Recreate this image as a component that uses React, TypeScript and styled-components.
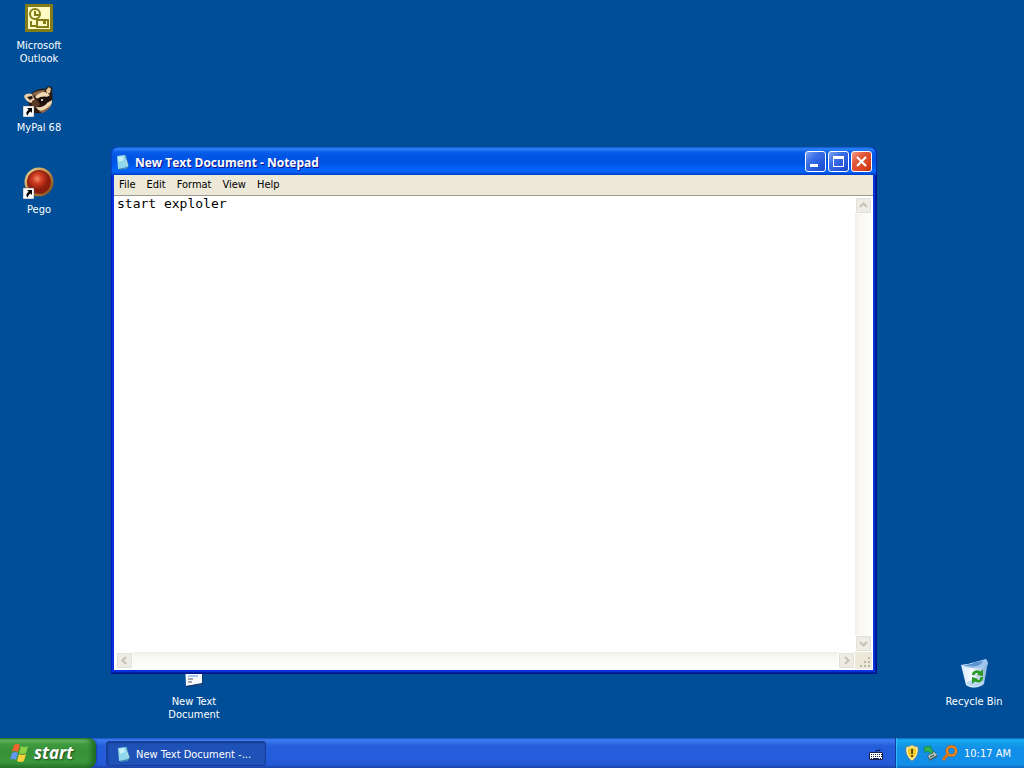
import React, { useState } from "react";
import styled, { createGlobalStyle, css } from "styled-components";

const GlobalStyle = createGlobalStyle`
  * { box-sizing: border-box; }
  body { margin: 0; font: 11px/13px "DejaVu Sans Condensed", "DejaVu Sans", sans-serif; }
  button, textarea { font: inherit; margin: 0; }
`;

const Screen = styled.div`
  display: flex;
  flex-direction: column;
  min-height: 100vh;
  background: #004e98;
`;

const Desktop = styled.main`
  position: relative;
  flex: 1;
  display: flex;
  overflow: hidden;
`;

const IconColumn = styled.div`
  display: flex;
  flex-direction: column;
  gap: 20px;
  padding: 3px 0 0 1px;
`;

const Shortcut = styled.button<{ $left?: number; $right?: number }>`
  display: flex;
  flex-direction: column;
  align-items: center;
  gap: 4px;
  width: 76px;
  height: 62px;
  padding: 0;
  border: 0;
  background: none;
  color: #fff;
  line-height: 13px;
  ${(p) =>
    (p.$left !== undefined || p.$right !== undefined) &&
    css`
      position: absolute;
      bottom: 17px;
      ${p.$left !== undefined ? `left: ${p.$left}px;` : `right: ${p.$right}px;`}
    `}
  svg { flex: none; }
`;

const Window = styled.section`
  position: absolute;
  top: 147px;
  bottom: 64px;
  left: 111px;
  right: 147px;
  display: flex;
  flex-direction: column;
  padding: 0 4px 4px 3px;
  border-radius: 7px 7px 0 0;
  background: #0831d9;
  box-shadow: inset -1px -1px #00138c, inset 1px 0 #0019cf, inset -2px -2px #001ea0, inset 2px 0 #0831d9;
`;

const TitleBar = styled.header`
  display: flex;
  align-items: center;
  gap: 4px;
  height: 28px;
  margin: 0 -4px 0 -3px;
  padding: 1px 5px 0 4px;
  border-radius: 7px 7px 0 0;
  background: linear-gradient(
    #0958d8 0, #2f82f5 2px, #0a5fec 5px, #0055e3 9px, #0054e5 16px,
    #0363fb 22px, #0262fb 25px, #0047d0 27px, #003dc8 28px
  );
  box-shadow: inset 1px 0 #0840c8, inset -1px 0 #0028a8;
`;

const Title = styled.h1`
  flex: 1;
  margin: 0;
  padding-top: 2px;
  font: bold 12px/16px "Open Sans", "Noto Sans", sans-serif;
  color: #fff;
  text-shadow: 1px 1px #0f1089;
`;

const Caption = styled.div`
  display: flex;
  gap: 2px;
`;

const CaptionButton = styled.button<{ $close?: boolean }>`
  display: flex;
  width: 21px;
  height: 21px;
  padding: 0;
  align-items: center;
  justify-content: center;
  border: 1px solid #fff;
  border-radius: 3px;
  background: ${(p) =>
    p.$close
      ? "linear-gradient(135deg, #f0a08a, #e2583a 35%, #d84220 75%, #b43010)"
      : "linear-gradient(135deg, #7da4f4, #3c6fe6 35%, #2457da 75%, #1a48c8)"};
`;

const MenuBar = styled.nav`
  display: flex;
  gap: 1px;
  height: 21px;
  border-bottom: 1px solid #9d9a8c;
  background: #ece9d8;
`;

const MenuItem = styled.button`
  padding: 0 5px 2px;
  border: 0;
  background: none;
  color: #000;
`;

const Client = styled.div`
  flex: 1;
  display: grid;
  grid-template: minmax(0, 1fr) 17px / minmax(0, 1fr) 17px;
  padding: 1px 1px 1px 2px;
  background: #fff;
`;

const Editor = styled.textarea`
  width: 100%;
  height: 100%;
  padding: 0 1px;
  border: 0;
  outline: 0;
  resize: none;
  overflow: hidden;
  background: #fff;
  color: #000;
  font: 13px/14px "DejaVu Sans Mono", monospace;
`;

const ScrollTrack = styled.div<{ $vertical?: boolean }>`
  display: flex;
  flex-direction: ${(p) => (p.$vertical ? "column" : "row")};
  justify-content: space-between;
  background: linear-gradient(${(p) => (p.$vertical ? "to right" : "to bottom")}, #f0eee6, #f8f7f2 4px, #fefefb);
`;

const ScrollButton = styled.button`
  display: flex;
  width: 17px;
  height: 17px;
  padding: 0;
  align-items: center;
  justify-content: center;
  border: 1px solid #fff;
  border-radius: 2px;
  background: #eeede5;
  box-shadow: inset 0 0 0 1px #e2e0d6;
`;

const Corner = styled.div`
  display: flex;
  align-items: flex-end;
  justify-content: flex-end;
  background: #ece9d8;
`;

const Taskbar = styled.footer`
  display: flex;
  height: 30px;
  background: linear-gradient(#1f50c8 0, #3b80f2 2px, #3472ea 4px, #245edb 8px, #245cdb 22px, #2358d2 27px, #1941a5 30px);
`;

const StartButton = styled.button`
  display: flex;
  align-items: center;
  gap: 4px;
  width: 96px;
  padding: 0 0 1px 10px;
  border: 0;
  border-radius: 0 8px 8px 0;
  background: linear-gradient(#2f7a30 0, #6fbf6a 2px, #3f9a3f 6px, #379237 14px, #3a973a 24px, #2c7a2c 30px);
  box-shadow: inset -4px 0 5px #1f6a24, 1px 0 2px #1840a8;
  color: #fff;
  font: italic bold 17px/20px "Open Sans", "Noto Sans", sans-serif;
  text-shadow: 1px 1px 2px #1c4a1c;
`;

const TaskButton = styled.button`
  display: flex;
  align-items: center;
  gap: 4px;
  width: 160px;
  height: 25px;
  margin: 3px 0 0 10px;
  padding: 1px 9px 0;
  border: 1px solid #173c97;
  border-radius: 3px;
  background: #1e52b7;
  box-shadow: inset 1px 1px 2px #153a8e;
  color: #fff;
  white-space: nowrap;
`;

const LanguageButton = styled.button`
  display: flex;
  align-items: center;
  margin-left: auto;
  padding: 2px 12px 0;
  border: 0;
  background: none;
`;

const Tray = styled.div`
  display: flex;
  align-items: center;
  gap: 3px;
  padding: 0 13px 0 8px;
  border-left: 1px solid #0f3f9e;
  background: linear-gradient(#0c59b9 0, #18b0f4 2px, #139ee9 5px, #1290e8 10px, #118ee9 22px, #1290e4 27px, #0d5ebc 30px);
  box-shadow: inset 1px 0 1px #38bff8;
  color: #fff;
`;

const Clock = styled.time`
  margin-left: 3px;
`;

const ShortcutArrow = () => (
  <g>
    <path d="M0 21h11v11H0z" fill="#fff" stroke="#555" strokeWidth=".5" />
    <path d="M4 23h5v5l-1.5-1.5C5.500 28 5 29 5 30.500 2.500 29 3 26.500 5.700 24.700z" fill="#000" />
  </g>
);

const OutlookIcon = () => (
  <svg width="32" height="32" viewBox="0 0 32 32" aria-hidden="true">
    <path d="M2 1h28v28H2z" fill="#827d16" />
    <path d="M5 4h22v22H5z" fill="#fffbc4" />
    <g fill="none" stroke="#827d16" strokeWidth="2">
      <circle cx="12" cy="11" r="5" />
      <path d="M12 8v4h4M8 18v5h5" />
      <path d="M14 17h11v7H14z" fill="#fffbc4" />
    </g>
    <path d="M20 18h3v3h-3z" fill="#827d16" />
  </svg>
);

const RaccoonIcon = () => (
  <svg width="32" height="32" viewBox="0 0 32 32" aria-hidden="true">
    <path d="M8 9c3-3 9-6 14-5l4-3c3 0 4 3 3 6 1 5 1 11-2 15-5 6-13 8-18 5-4-3-4-12-1-18z" fill="#2b1a12" />
    <path d="M9 9c4-3 8-4 13-4l-1 3-9 3z" fill="#8c6a4c" />
    <path d="M23 5l3-3 2 2-1 4-3 1z" fill="#e5c49a" />
    <path d="M1 11c2-3 5-3 8-2l3 6-4 3c-3-1-6-3-7-7z" fill="#e9cfa8" />
    <path d="M4 12l5-1 1 2-3 2z" fill="#21140f" />
    <path d="M12 12c2-3 6-5 10-5l5 3-3 2-4 1-5 1z" fill="#efd8b4" />
    <path d="M14 14c3-3 8-3 12-2l2 4-4 4-8-1z" fill="#1b100c" />
    <path d="M9 16l4-2 4 5-3 4-5-1z" fill="#5a3b28" />
    <path d="M13 22c5 1 9-1 11-4l5-3c0 5-2 8-6 10-4 2-8 1-10-3z" fill="#efd8b4" />
    <path d="M14 25c5 2 10-1 14-6-1 4-5 8-9 9z" fill="#916749" />
    <circle cx="19" cy="15" r="1" fill="#fff" />
    <ShortcutArrow />
  </svg>
);

const PegoIcon = () => (
  <svg width="32" height="32" viewBox="0 0 32 32" aria-hidden="true">
    <defs>
      <radialGradient id="pego" cx=".42" cy=".35">
        <stop offset="0" stopColor="#f38a68" />
        <stop offset=".45" stopColor="#cf3c20" />
        <stop offset="1" stopColor="#8c1c0c" />
      </radialGradient>
      <linearGradient id="ring" x2="1" y2="1">
        <stop offset="0" stopColor="#eadb9c" />
        <stop offset=".5" stopColor="#c98a48" />
        <stop offset="1" stopColor="#6b4015" />
      </linearGradient>
    </defs>
    <circle cx="16" cy="15" r="14.500" fill="url(#ring)" />
    <circle cx="16" cy="15" r="12" fill="#892413" />
    <circle cx="16" cy="15" r="11" fill="url(#pego)" />
    <ShortcutArrow />
  </svg>
);

const TextFileIcon = () => (
  <svg width="32" height="32" viewBox="0 0 32 32" aria-hidden="true">
    <path d="M7 2h17v23l-16 2z" fill="#f5f9ff" />
    <path d="M24 3l1 22-16 3-1-1 16-3z" fill="#17335e" />
    <path d="M10 17h10" stroke="#5b9ad0" />
    <path d="M10 20h5M10 23h4" stroke="#555" />
  </svg>
);

const RecycleIcon = () => (
  <svg width="32" height="32" viewBox="0 0 32 32" aria-hidden="true">
    <defs>
      <linearGradient id="bin" x2="1">
        <stop offset="0" stopColor="#d9eafb" />
        <stop offset=".4" stopColor="#f3f9ff" />
        <stop offset="1" stopColor="#83acd8" />
      </linearGradient>
    </defs>
    <path d="M3 6l7-1L28 0l2 3-4 22c-4 4-12 5-18 1z" fill="url(#bin)" />
    <path d="M3 6l10-1 15-5 2 5c-7 6-19 5-27 1z" fill="#9ec6f0" />
    <path d="M6 6c6 0 9-2 11-3l8-1c-2 5-9 7-19 4z" fill="#5d91ce" />
    <path d="M8 24c5-4 12-4 18-1-2 5-13 7-18 1z" fill="#bcd7f1" />
    <g fill="none" stroke="#279b22" strokeWidth="2.600">
      <path d="M15 16c1-4 5-4 7-2M24 18c-1 5-4 5-7 3" />
    </g>
    <path d="M25 10v7l-6-1zM14 25v-7l6 2z" fill="#279b22" />
  </svg>
);

const NotepadIcon = () => (
  <svg width="16" height="16" viewBox="0 0 16 16" aria-hidden="true">
    <path d="M3 2l8-1 3 11-2 3-8 1z" fill="#3d86b5" />
    <path d="M2 2l8-1 2 12-9 2z" fill="#8fd7ed" />
    <path d="M3 3l5-1 1 4-5 2z" fill="#c5f0f7" />
    <path d="M10 2l3 9-1 2z" fill="#d8f3ef" />
  </svg>
);

const FlagIcon = () => (
  <svg width="20" height="19" viewBox="0 0 20 19" aria-hidden="true">
    <path d="M4 2q3-2 6 0L8 9Q5 7 2 9z" fill="#f1642d" />
    <path d="M11 3q3 2 7 0l-2 7q-4 2-7 0z" fill="#8bd145" />
    <path d="M2 10q3-2 6 0l-2 7q-3-2-6 0z" fill="#6296f1" />
    <path d="M9 11q3 2 7 0l-2 7q-4 2-7 0z" fill="#fbcf3c" />
  </svg>
);

const KeyboardIcon = () => (
  <svg width="14" height="14" viewBox="0 0 14 14" aria-hidden="true">
    <path d="M7 5V4M7 3.500h4M11 3V2" fill="none" stroke="#101c50" />
    <path d="M.5 5.500h13v7H.5z" fill="#fff" stroke="#15214e" />
    <path d="M2 7.500h11M2 9.500h11" stroke="#15214e" strokeDasharray="1 1" />
    <path d="M2 11.500h10" stroke="#15214e" strokeDasharray="1 1 6 1" />
  </svg>
);

const ShieldIcon = () => (
  <svg width="16" height="16" viewBox="0 0 16 16" aria-hidden="true">
    <path d="M8 0q3 2 6 2 1 9-6 14Q1 11 2 2q3 0 6-2z" fill="#fff2ae" stroke="#98804a" strokeWidth=".7" />
    <path d="M8 2q2 1 4 1.500Q13 10 8 14 3 10 4 3.500 6 3 8 2z" fill="#f8ca1d" />
    <path d="M7.300 4h1.500v5H7.300zM7.300 10h1.500v2H7.300z" fill="#33280c" />
  </svg>
);

const EjectIcon = () => (
  <svg width="16" height="16" viewBox="0 0 16 16" aria-hidden="true">
    <path d="M4 11l7-5 4 5-8 5z" fill="#455f66" />
    <path d="M5 11l6-4 3 3-7 4z" fill="#b5c9bd" />
    <path d="M7 12l4-2" stroke="#263b3d" />
    <path d="M1 2l7-1-1 2c3 1 3 3 2 6L6 7 4 6 2 8z" fill="#32b34b" stroke="#147c39" strokeWidth=".6" />
  </svg>
);

const SearchIcon = () => (
  <svg width="16" height="16" viewBox="0 0 16 16" aria-hidden="true">
    <circle cx="9.500" cy="6" r="4.500" fill="none" stroke="#9a5418" strokeWidth="3.200" />
    <circle cx="9.500" cy="6" r="4.500" fill="none" stroke="#f08a22" strokeWidth="2.200" />
    <path d="M6 9l-5 6" stroke="#d87318" strokeWidth="3" />
  </svg>
);

const Chevron = ({ turn }: { turn: number }) => (
  <svg width="9" height="9" viewBox="0 0 9 9" aria-hidden="true">
    <path d="M1 6l3.500-3.500L8 6" transform={`rotate(${turn} 4.5 4.5)`} fill="none" stroke="#c4c2b6" strokeWidth="2" />
  </svg>
);

const menus = ["File", "Edit", "Format", "View", "Help"];

const desktopShortcuts = [
  { name: "Microsoft Outlook", Icon: OutlookIcon },
  { name: "MyPal 68", Icon: RaccoonIcon },
  { name: "Pego", Icon: PegoIcon },
];

export default function App() {
  const [text, setText] = useState("start exploler");
  return (
    <Screen>
      <GlobalStyle />
      <Desktop>
        <IconColumn>
          {desktopShortcuts.map(({ name, Icon }) => (
            <Shortcut key={name}>
              <Icon />
              {name}
            </Shortcut>
          ))}
        </IconColumn>
        <Shortcut $left={156}>
          <TextFileIcon />
          <span>New Text<br />Document</span>
        </Shortcut>
        <Shortcut $right={12}>
          <RecycleIcon />
          Recycle Bin
        </Shortcut>
        <Window aria-label="Notepad">
          <TitleBar>
            <NotepadIcon />
            <Title>New Text Document - Notepad</Title>
            <Caption>
              <CaptionButton aria-label="Minimize">
                <svg width="19" height="19" viewBox="0 0 19 19"><path d="M4 12h8v3H4z" fill="#fff" /></svg>
              </CaptionButton>
              <CaptionButton aria-label="Maximize">
                <svg width="19" height="19" viewBox="0 0 19 19"><path d="M4 4h11v11H4zM5 7v7h9V7z" fill="#fff" fillRule="evenodd" /></svg>
              </CaptionButton>
              <CaptionButton $close aria-label="Close">
                <svg width="19" height="19" viewBox="0 0 19 19"><path d="M5 5l9 9M14 5l-9 9" stroke="#fff" strokeWidth="2.200" /></svg>
              </CaptionButton>
            </Caption>
          </TitleBar>
          <MenuBar>
            {menus.map((menu) => <MenuItem key={menu}>{menu}</MenuItem>)}
          </MenuBar>
          <Client>
            <Editor aria-label="Document text" spellCheck={false} value={text} onChange={(e) => setText(e.target.value)} />
            <ScrollTrack $vertical>
              <ScrollButton aria-label="Scroll up"><Chevron turn={0} /></ScrollButton>
              <ScrollButton aria-label="Scroll down"><Chevron turn={180} /></ScrollButton>
            </ScrollTrack>
            <ScrollTrack>
              <ScrollButton aria-label="Scroll left"><Chevron turn={270} /></ScrollButton>
              <ScrollButton aria-label="Scroll right"><Chevron turn={90} /></ScrollButton>
            </ScrollTrack>
            <Corner>
              <svg width="13" height="13" viewBox="0 0 13 13" aria-hidden="true">
                <path d="M9 1h2v2H9zM5 5h2v2H5zM9 5h2v2H9zM1 9h2v2H1zM5 9h2v2H5zM9 9h2v2H9z" fill="#bdb5a0" />
              </svg>
            </Corner>
          </Client>
        </Window>
      </Desktop>
      <Taskbar>
        <StartButton><FlagIcon />start</StartButton>
        <TaskButton><NotepadIcon />New Text Document -...</TaskButton>
        <LanguageButton aria-label="Keyboard"><KeyboardIcon /></LanguageButton>
        <Tray>
          <ShieldIcon />
          <EjectIcon />
          <SearchIcon />
          <Clock>10:17 AM</Clock>
        </Tray>
      </Taskbar>
    </Screen>
  );
}
